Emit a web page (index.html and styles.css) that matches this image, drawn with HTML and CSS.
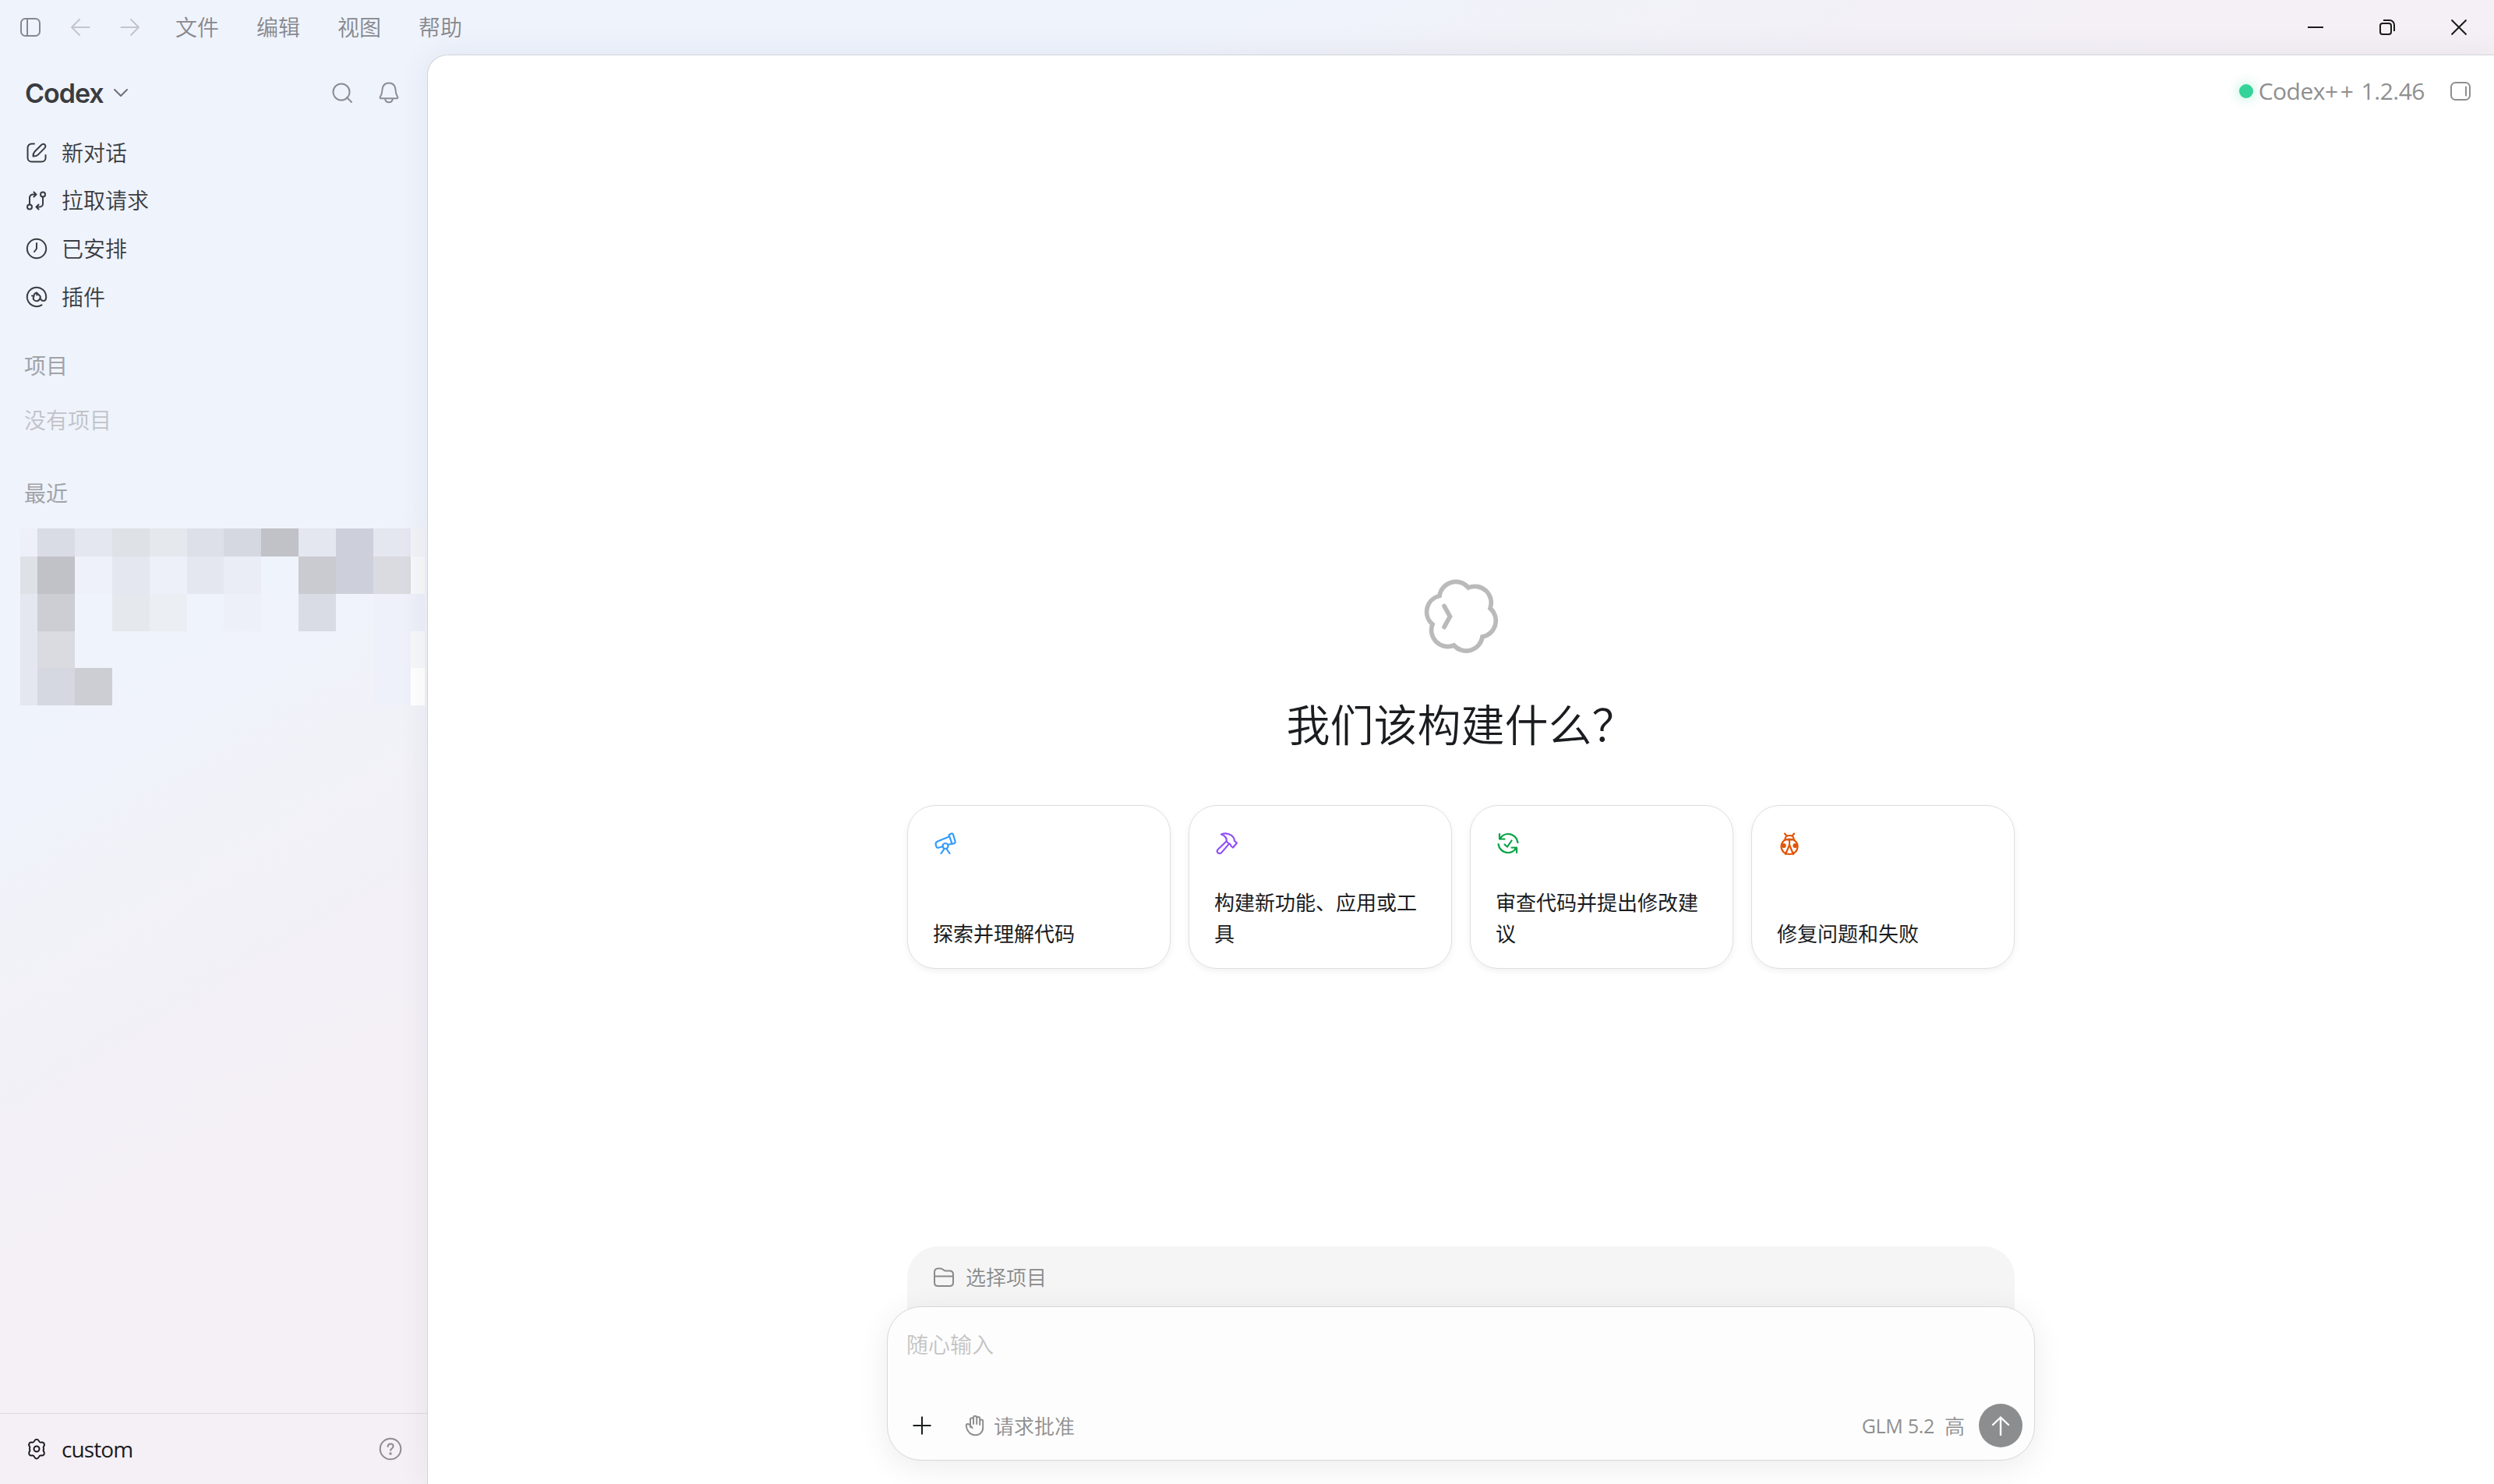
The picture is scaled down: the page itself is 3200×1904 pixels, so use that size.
FILE: index.html
```html
<!DOCTYPE html>
<html lang="zh-CN">

<head>
  <meta charset="utf-8">
  <title>Codex</title>
  <link rel="stylesheet" href="styles.css">
</head>

<body>
  <!-- 标题栏 -->
  <header class="titlebar">
    <div class="nav-icons">
      <svg class="icon" width="28" height="28" viewBox="0 0 28 28"><rect x="2" y="3" width="24" height="22" rx="5.5"/><path d="M10 3v22"/></svg>
      <svg class="icon faint" width="28" height="28" viewBox="0 0 28 28"><path d="M25.500 14H3M13 4L3 14l10 10"/></svg>
      <svg class="icon faint" width="28" height="28" viewBox="0 0 28 28"><path d="M2.500 14H25M15 4l10 10-10 10"/></svg>
    </div>
    <nav class="menu">
      <span>文件</span>
      <span>编辑</span>
      <span>视图</span>
      <span>帮助</span>
    </nav>
    <div class="window-buttons">
      <svg class="icon" width="20" height="20" viewBox="0 0 20 20"><path d="M0 10h20"/></svg>
      <svg class="icon" width="20" height="20" viewBox="0 0 20 20"><rect x="1" y="5" width="14" height="14" rx="3"/><path d="M5 1h8a6 6 0 0 1 6 6v8"/></svg>
      <svg class="icon" width="20" height="20" viewBox="0 0 20 20"><path d="M.5.5l19 19M19.500.5l-19 19"/></svg>
    </div>
  </header>

  <div class="app">
    <!-- 侧边栏 -->
    <aside class="sidebar">
      <div class="brand">
        <span class="brand-name">Codex</span>
        <svg class="icon chevron" width="20" height="14" viewBox="0 0 20 14"><path d="M2 3l8 8 8-8"/></svg>
        <div class="brand-actions">
          <svg class="icon" width="28" height="28" viewBox="0 0 28 28"><circle cx="13" cy="13" r="10.500"/><path d="M20 20l6 6"/></svg>
          <svg class="icon" width="28" height="28" viewBox="0 0 28 28"><path d="M14 1.500c-5 0-8 3.500-8.500 8.500-.3 4-.3 6-2.500 9-.8 1.300-.3 2.200 1 2.200h20c1.300 0 1.800-.9 1-2.200-2.200-3-2.200-5-2.500-9-.5-5-3.500-8.500-8.500-8.500zM9 21.500c.5 3 2.500 4.800 5 4.800s4.500-1.800 5-4.800"/></svg>
        </div>
      </div>

      <ul class="nav">
        <li>
          <svg class="icon" width="28" height="28" viewBox="0 0 28 28"><path d="M11 2.500H7.500a5 5 0 0 0-5 5v13a5 5 0 0 0 5 5h13a5 5 0 0 0 5-5V17"/><path d="M9.500 18.500c0-3 .5-4.500 2-6l8.500-8.500c1.500-1.500 3.300-1.500 4.500-.4 1.200 1.200 1.200 3-.3 4.500l-8.500 8.500c-1.500 1.500-3.200 1.900-6.200 1.900z"/></svg>
          <span>新对话</span>
        </li>
        <li>
          <svg class="icon" width="28" height="28" viewBox="0 0 28 28"><circle cx="5" cy="22.500" r="3"/><circle cx="22" cy="6.500" r="3"/><path d="M5 19.500V10.500a4 4 0 0 1 4-4h4M10.500 3.500l3 3-3 3M22 9.500v9a4 4 0 0 1-4 4h-4M16.500 19.500l-3 3 3 3"/></svg>
          <span>拉取请求</span>
        </li>
        <li>
          <svg class="icon" width="28" height="28" viewBox="0 0 28 28"><circle cx="14" cy="14" r="12.200"/><path d="M14 7v7l-3 4"/></svg>
          <span>已安排</span>
        </li>
        <li>
          <svg class="icon" width="28" height="28" viewBox="0 0 28 28"><path d="M20.500 24.300A12.200 12.200 0 1 1 26.200 14c0 3.500-1.500 5-3.700 5-2.500 0-3-2-4-3"/><path d="M8 12.500l2.500.5c0-3 1.500-4 3.500-4.500l4.500 4.500c.5 1 .2 3-1 4.500-1.500 1.700-4 2.200-6 1-1.800-1-2.300-3-1-5.500M14 8.500l.5 3"/></svg>
          <span>插件</span>
        </li>
      </ul>

      <div class="section-title projects-title">项目</div>
      <div class="empty">没有项目</div>
      <div class="section-title recent-title">最近</div>

      <!-- 打码的最近对话 -->
      <div class="mosaic">
        <i class="m1"></i><i class="m5"></i><i class="m3"></i><i class="g3"></i><i class="g2"></i><i class="m4"></i><i class="m6"></i><i class="g7"></i><i class="m3"></i><i class="m7"></i><i class="m3"></i><i class="w1"></i>
        <i class="g3"></i><i class="g7"></i><i class="m0"></i><i class="m3"></i><i class="m1"></i><i class="m3"></i><i class="m2"></i><i></i><i class="g6"></i><i class="m7"></i><i class="g4"></i><i class="w2"></i>
        <i class="m3"></i><i class="g5"></i><i></i><i class="g2"></i><i class="g1"></i><i></i><i class="m1"></i><i></i><i class="m5"></i><i></i><i class="m0"></i><i class="m1"></i>
        <i class="m3"></i><i class="g4"></i><i></i><i></i><i></i><i></i><i></i><i></i><i></i><i></i><i class="m0"></i><i class="w2"></i>
        <i class="m3"></i><i class="m6"></i><i class="g5"></i><i></i><i></i><i></i><i></i><i></i><i></i><i></i><i class="m0"></i><i class="w3"></i>
      </div>

      <div class="account">
        <svg class="icon" width="28" height="28" viewBox="0 0 28 28"><path d="M11.300 3.500c1-2.500 4.400-2.500 5.400 0 .7 1.800 1.900 2.400 3.800 2.100 2.700-.4 4.400 2.300 2.800 4.800-1.100 1.700-1.100 2.300-.2 3.600-.9 1.300-.9 1.900.2 3.600 1.600 2.500-.1 5.200-2.800 4.800-1.900-.3-3.100.3-3.800 2.100-1 2.500-4.400 2.500-5.400 0-.7-1.800-1.900-2.400-3.800-2.100-2.700.4-4.400-2.300-2.800-4.800 1.100-1.700 1.100-2.300.2-3.600.9-1.300.9-1.900-.2-3.600C3.100 7.900 4.800 5.200 7.500 5.600c1.900.3 3.100-.3 3.800-2.100z"/><circle cx="14" cy="14" r="3.500"/></svg>
        <span>custom</span>
        <svg class="icon help" width="30" height="30" viewBox="0 0 30 30"><circle cx="15" cy="15" r="13.300"/><path d="M11.500 12c.3-2.300 1.700-3.500 3.600-3.500 2.100 0 3.500 1.300 3.500 3.100 0 2.900-3.500 2.800-3.500 5.400"/><circle class="dot" cx="15" cy="21" r="1.700"/></svg>
      </div>
    </aside>

    <!-- 主区域 -->
    <main class="main">
      <div class="toolbar">
        <span class="status-dot"></span>
        <span class="version">Codex<span class="plusplus">++</span> 1.2.46</span>
        <svg class="icon" width="28" height="26" viewBox="0 0 28 26"><rect x="2" y="2" width="24" height="22" rx="5.500"/><path d="M21 7.500v11"/></svg>
      </div>

      <section class="hero">
        <svg class="logo" width="96" height="96" viewBox="0 0 96 96"><path d="M20 21.500A21 21 0 0 1 57 11A21 21 0 0 1 85 37.500A21 21 0 0 1 75 74A21 21 0 0 1 38.500 85A21 21 0 0 1 11 58A21 21 0 0 1 20 21.500z"/><path d="M26 34.500L33.500 48 26 61.500"/></svg>
        <h1>我们该构建什么？</h1>
        <div class="cards">
          <div class="card">
            <svg class="icon blue" width="28" height="28" viewBox="0 0 28 28"><path d="M18.500 3.200l2.700-1.500c1.200-.6 2.300-.2 2.800 1l2.600 8.800c.4 1.200-.2 2.200-1.400 2.600l-2.600.7zM18.700 5.500L4 11.500c-2 .8-2.700 2-2.300 4l.6 2.500c.5 1.600 1.700 2 3.300 1.500l5-1.500M22 14.500l-4.500 1.200"/><circle cx="14" cy="17.500" r="3.500"/><path d="M12.500 21L8.500 27M15.500 21l4 6"/></svg>
            <p>探索并理解代码</p>
          </div>
          <div class="card">
            <svg class="icon purple" width="28" height="28" viewBox="0 0 28 28"><path d="M7 2.500c6-2.500 13-.5 16 4.500.8 1.500.5 3 1 4l3 2.500-5 6-2.500-2c-.3-1.500-.7-3-2.500-3l-3.500-3c1-3.500-1.500-7.500-6.500-9z"/><path d="M13.500 11.500L3 21.500c-1.500 1.500-1.500 3.500-.3 4.700 1.300 1.200 3.500 1 4.800-.6l9.500-11"/></svg>
            <p>构建新功能、应用或工具</p>
          </div>
          <div class="card">
            <svg class="icon green" width="28" height="28" viewBox="0 0 28 28"><path d="M3 2v6.500h6.500M3.500 8.500C6 4 10 1.800 14.500 2c6.500.4 11.200 5 12 11M25 26v-6.500h-6.500M24.500 19.500C22 24 18 26.200 13.500 26 7 25.600 2.300 21 1.500 15"/><path d="M9.500 15.500l3.500 3 5.500-8"/></svg>
            <p>审查代码并提出修改建议</p>
          </div>
          <div class="card">
            <svg class="icon orange" width="28" height="30" viewBox="0 0 28 30"><path d="M8 1.500l2 2.500M20 1.500l-2 2.500M8.500 8.500C8.500 5.500 10.500 4 14 4s5.500 1.500 5.500 4.500M7.500 9.500h13M14 8.500C7.500 8.500 3.500 12.500 3.500 18S7.500 28 14 28s10.500-4.500 10.500-10S20.500 8.500 14 8.500zM14 9v9M14 16L9 28M14 16l5 12"/><circle class="dot" cx="6.700" cy="17" r="3"/><circle class="dot" cx="21.300" cy="17" r="3"/></svg>
            <p>修复问题和失败</p>
          </div>
        </div>
      </section>

      <section class="composer-wrap">
        <div class="project-bar">
          <svg class="icon" width="28" height="28" viewBox="0 0 28 28"><path d="M2 7.500C2 4 3.500 2.500 6.500 2.500h3.200c3.300 0 3.500 3 6.300 3h5.500c3 0 4.500 1.500 4.500 4.500v10.500c0 3-1.500 4.500-4.500 4.500h-15C3.500 25 2 23.500 2 20.500zM2 12.500h24"/></svg>
          <span>选择项目</span>
        </div>
        <div class="composer">
          <div class="placeholder">随心输入</div>
          <div class="composer-footer">
            <svg class="icon plus" width="24" height="24" viewBox="0 0 24 24"><path d="M12 .5v23M.5 12h23"/></svg>
            <svg class="icon hand" width="26" height="28" viewBox="0 0 26 28"><path d="M7 16V6.500c0-3 4-3 4 0V12M11 12V4c0-3 4.200-3 4.200 0v8M15.200 12V5c0-2.800 4-2.800 4 0v8M19.200 13V8.500c0-2.800 4-2.800 4 0v8c0 6-4 9.800-9.700 9.800-6 0-9-3.300-11-8.500L1.800 14.500c-.5-2.500 3-3.500 4.200-1.500L9.500 17"/></svg>
            <span>请求批准</span>
            <span class="model">GLM 5.2</span>
            <span class="effort">高</span>
            <div class="send">
              <svg class="icon" width="26" height="26" viewBox="0 0 26 26"><path d="M13 25V2.500M3 12L13 2.500 23 12"/></svg>
            </div>
          </div>
        </div>
      </section>
    </main>
  </div>
</body>

</html>
```
FILE: styles.css
```css
* {
  box-sizing: border-box;
}

body {
  margin: 0;
  height: 1904px;
  overflow: hidden;
  font-family: "Open Sans", "Noto Sans CJK SC", sans-serif;
  font-size: 28px;
  font-weight: 350;
  color: #1a1c1f;
  background: linear-gradient(to bottom right, #eff3fc 0%, #eff3fc 25%, #f1f2f8 32%, #f3f0f7 39%, #f5f0f5 50%, #f5f0f5 100%);
}

.icon {
  flex: none;
  fill: none;
  stroke: currentColor;
  stroke-width: 2;
  stroke-linecap: round;
  stroke-linejoin: round;
}

.icon .dot {
  fill: currentColor;
  stroke: none;
}

.titlebar {
  display: flex;
  align-items: center;
  height: 70px;
  padding-left: 25px;
  color: #86888d;
}

.nav-icons {
  display: flex;
  gap: 36px;
}

.faint {
  color: #c3c5cb;
}

.menu {
  display: flex;
  gap: 48px;
  margin-left: 44px;
  padding-bottom: 2px;
}

.window-buttons {
  display: flex;
  gap: 72px;
  margin-left: auto;
  padding-right: 35px;
  color: #1b1b1b;
}

.window-buttons .icon {
  stroke-linecap: butt;
}

.app {
  display: flex;
  height: 1834px;
}

.sidebar {
  display: flex;
  flex-direction: column;
  flex: none;
  width: 548px;
  color: #3a3c40;
}

.brand {
  display: flex;
  align-items: center;
  height: 60px;
  margin-top: 19px;
  padding: 0 35px 0 32px;
}

.brand-name {
  font-family: Inter, sans-serif;
  font-size: 34px;
  font-weight: 600;
  letter-spacing: -1px;
}

.chevron {
  margin-left: 12px;
  color: #6e7075;
}

.brand-actions {
  display: flex;
  gap: 32px;
  margin-left: auto;
  color: #8b8d91;
}

.nav {
  margin: 16px 0 0;
  padding: 0 0 0 33px;
  list-style: none;
}

.nav li {
  display: flex;
  align-items: center;
  gap: 18px;
  height: 61.600px;
}

.nav span {
  padding-bottom: 2px;
}

.section-title,
.empty {
  height: 40px;
  padding-left: 31px;
  line-height: 40px;
}

.section-title {
  font-weight: 400;
  color: #a1a3a7;
}

.empty {
  margin-top: 30px;
  color: #c0c2c7;
}

.projects-title {
  margin-top: 38px;
}

.recent-title {
  margin-top: 54px;
}

.mosaic {
  display: grid;
  grid-template-columns: 22px repeat(10, 47.900px) 18px;
  grid-template-rows: 36px 48px 48px 47px 48px;
  margin: 25px 0 0 26px;
}

.m0 { background: #eef1fa; }
.m1 { background: #edf0f9; }
.m2 { background: #eaedf6; }
.m3 { background: #e4e7f0; }
.m4 { background: #dde0e9; }
.m5 { background: #d9dce5; }
.m6 { background: #d5d8e1; }
.m7 { background: #cdd0da; }
.g1 { background: #ebeef3; }
.g2 { background: #e5e8ec; }
.g3 { background: #dee1e5; }
.g4 { background: #d9dbe0; }
.g5 { background: #cdced3; }
.g6 { background: #c9cbd0; }
.g7 { background: #c0c2c7; }
.w1 { background: #f2f3f6; }
.w2 { background: #f7f8fa; }
.w3 { background: #fff; }

.account {
  display: flex;
  align-items: center;
  gap: 18px;
  height: 91px;
  margin-top: auto;
  padding: 0 32px 0 33px;
  border-top: 1px solid #dcdae1;
  color: #1a1c1f;
}

.account span {
  font-weight: 400;
  letter-spacing: -.9px;
}

.help {
  margin-left: auto;
  color: #8d8c92;
}

.main {
  display: flex;
  flex-direction: column;
  align-items: center;
  flex: 1;
  border: 1px solid #d3d4da;
  border-width: 1px 0 0 1px;
  border-top-left-radius: 26px;
  background: #fff;
  box-shadow: 0 0 40px rgba(40, 40, 70, .07);
}

.toolbar {
  display: flex;
  align-items: center;
  align-self: stretch;
  justify-content: flex-end;
  height: 92px;
  padding-right: 29px;
  color: #8f8f8f;
}

.status-dot {
  width: 18px;
  height: 18px;
  border-radius: 50%;
  background: #34d399;
  box-shadow: 0 0 16px rgba(52, 211, 153, .45);
}

.version {
  margin: 0 32px 0 7px;
  padding-bottom: 2px;
  font-size: 30px;
  font-weight: 400;
  letter-spacing: -.5px;
}

.plusplus {
  letter-spacing: 2.500px;
}

.hero {
  display: flex;
  flex-direction: column;
  align-items: center;
  margin-top: 580px;
}

.logo {
  fill: none;
  stroke: #bababa;
  stroke-width: 5.700;
  stroke-linecap: round;
}

h1 {
  margin: 50px 0 64px;
  font-size: 56px;
  font-weight: 350;
  line-height: 80px;
}

.cards {
  display: grid;
  grid-template-columns: repeat(4, 338px);
  gap: 23px;
}

.card {
  display: flex;
  flex-direction: column;
  justify-content: space-between;
  height: 210px;
  padding: 34px 32px 24px;
  border: 1px solid #dedede;
  border-radius: 36px;
  box-shadow: 0 3px 8px rgba(0, 0, 0, .06);
}

.card p {
  margin: 0;
  font-size: 26px;
  font-weight: 400;
  line-height: 40px;
}

.blue { color: #339cff; }
.purple { color: #924ff7; }
.green { color: #04a344; }
.orange { color: #e25507; }

.card .icon {
  margin-left: 2px;
  stroke-width: 2.200;
}

.composer-wrap {
  display: flex;
  flex-direction: column;
  align-items: center;
  margin-top: auto;
  margin-bottom: 30px;
}

.project-bar {
  display: flex;
  align-items: center;
  gap: 14px;
  width: 1421px;
  height: 117px;
  margin-bottom: -40px;
  padding: 0 32px 37px 33px;
  border-radius: 40px 40px 0 0;
  background: #f5f5f5;
  font-size: 26px;
  color: #8a8a8a;
}

.project-bar span {
  padding-bottom: 2px;
}

.composer {
  display: flex;
  flex-direction: column;
  justify-content: space-between;
  width: 1473px;
  height: 198px;
  padding: 28px 15px 15px 24px;
  border: 1px solid #d8d8d8;
  border-radius: 44px;
  background: #fdfdfd;
  box-shadow: 0 8px 40px rgba(0, 0, 0, .08);
}

.placeholder {
  line-height: 40px;
  color: #c4c4c4;
}

.composer-footer {
  display: flex;
  align-items: center;
  height: 58px;
  padding-left: 8px;
  font-size: 26px;
  color: #8f8f8f;
}

.composer-footer span {
  padding-bottom: 1px;
}

.plus {
  color: #1a1c1f;
  stroke-linecap: butt;
}

.hand {
  margin: 0 11px 0 43px;
}

.model {
  margin-left: auto;
  font-size: 25px;
  font-weight: 400;
  letter-spacing: -.3px;
}

.effort {
  margin: 0 18px 0 13px;
}

.send {
  display: flex;
  align-items: center;
  justify-content: center;
  width: 56px;
  height: 56px;
  border-radius: 50%;
  background: #8c8d8f;
  color: #fff;
}

.send .icon {
  stroke-width: 2.400;
}
```
